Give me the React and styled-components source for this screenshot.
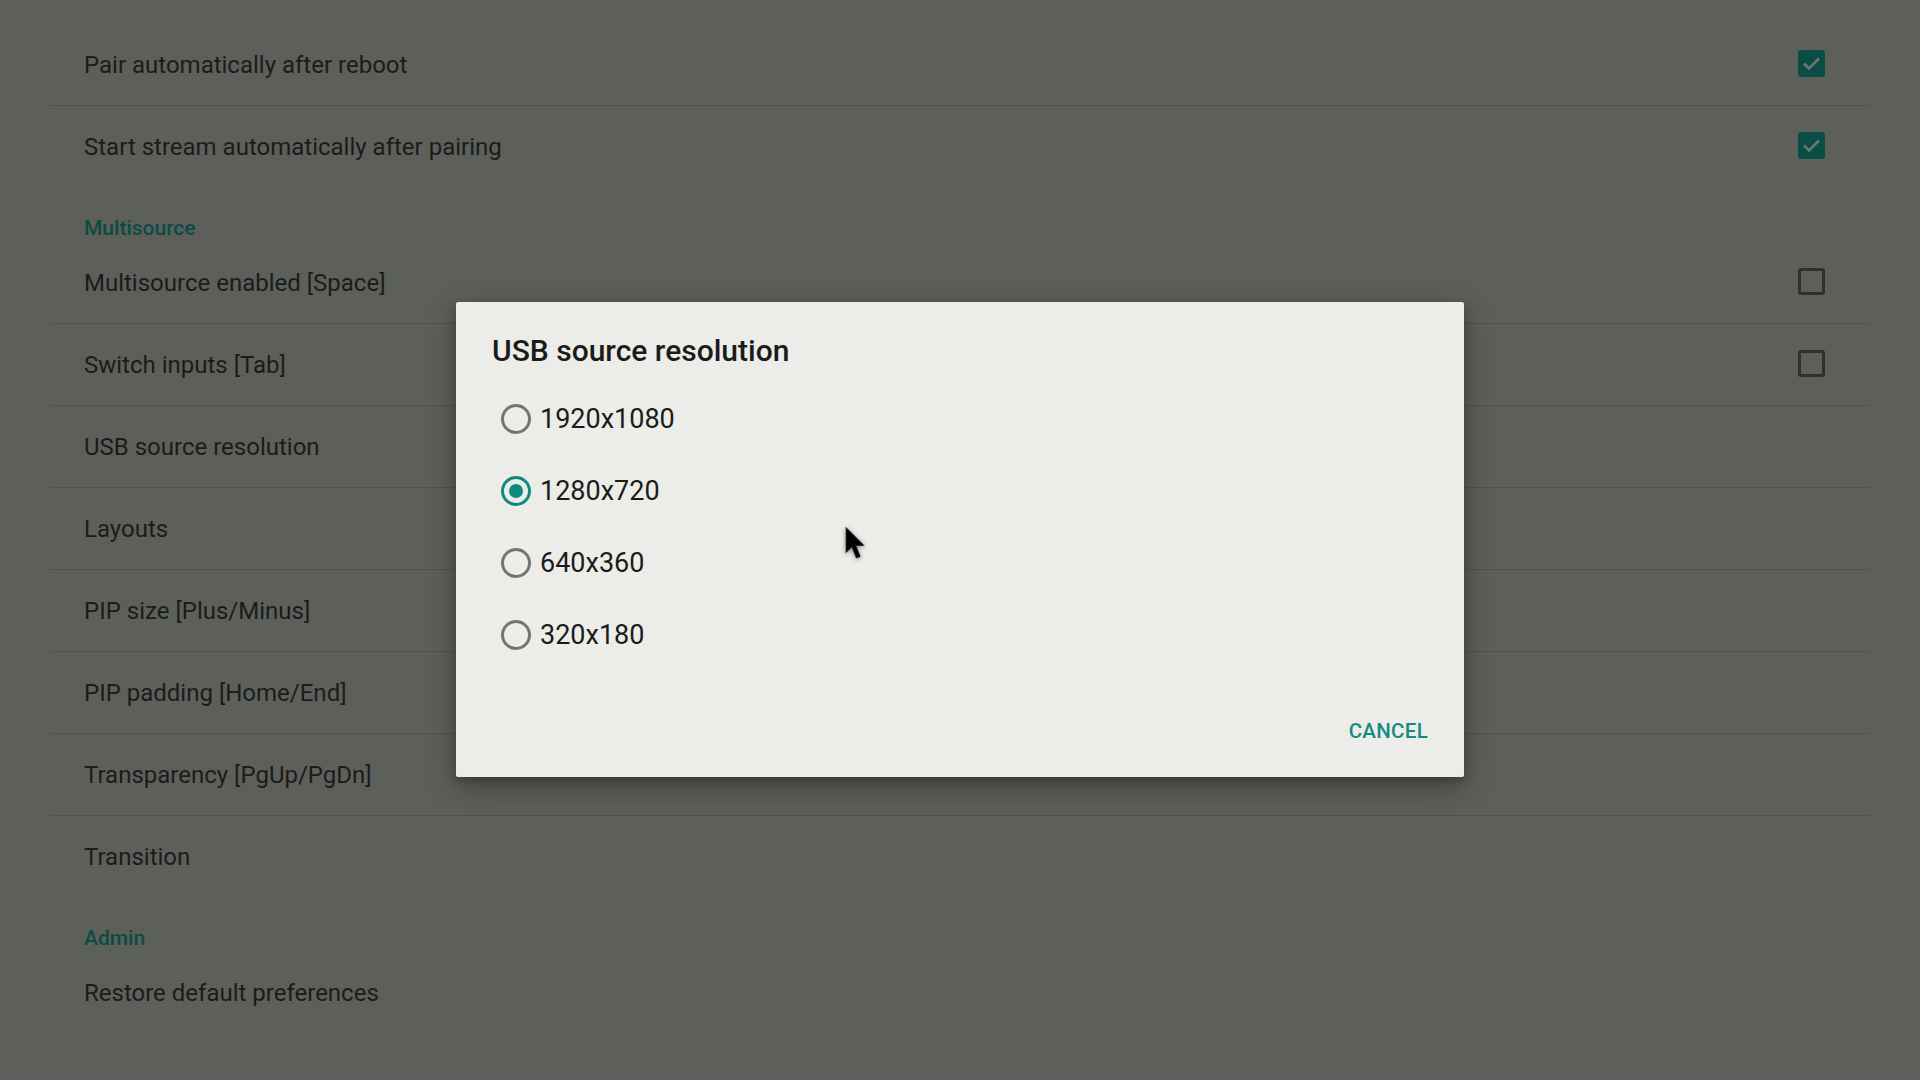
import React from 'react';
import styled, { createGlobalStyle } from 'styled-components';

const GlobalStyle = createGlobalStyle`
  html, body {
    margin: 0;
    padding: 0;
    background: #5d5f5a;
    font-family: Roboto, "Noto Sans", sans-serif;
  }
`;

const Screen = styled.div`
  position: relative;
  width: 1920px;
  height: 1080px;
  overflow: hidden;
  background: #5d5f5a;
`;

const List = styled.div`
  display: flex;
  flex-direction: column;
  margin: 0 50px 0 49px;
  padding-top: 24px;
`;

const Row = styled.div`
  box-sizing: border-box;
  height: 82px;
  display: flex;
  align-items: center;
  justify-content: space-between;
  padding: 0 45px 0 35px;
  border-bottom: 1px solid ${props => (props.divider ? '#51534e' : 'transparent')};
`;

const Label = styled.span`
  font-size: 24px;
  color: #1b1c1a;
`;

const Header = styled.div`
  box-sizing: border-box;
  height: 54px;
  padding: 28px 35px 0;
  font-size: 21px;
  font-weight: 500;
  line-height: 24px;
  color: #0b4b45;
`;

const Box = styled.div`
  box-sizing: border-box;
  width: 27px;
  height: 27px;
  margin-top: -3px;
  border-radius: 3px;
  display: flex;
  align-items: center;
  justify-content: center;
  background: ${props => (props.checked ? '#0a4c46' : 'transparent')};
  border: ${props => (props.checked ? 'none' : '3px solid #30312e')};
`;

const Scrim = styled.div`
  position: absolute;
  inset: 0;
  display: flex;
  align-items: flex-start;
  justify-content: center;
  padding-top: 302px;
`;

const Dialog = styled.div`
  box-sizing: border-box;
  width: 1008px;
  height: 475px;
  background: #ecede8;
  border-radius: 2px;
  box-shadow: 0 10px 30px rgba(0, 0, 0, 0.3), 0 4px 10px rgba(0, 0, 0, 0.2);
  padding: 30px 36px 0;
  display: flex;
  flex-direction: column;
`;

const Title = styled.div`
  font-size: 30px;
  font-weight: 500;
  line-height: 38px;
  color: #1b1b1b;
  margin-bottom: 13px;
`;

const Options = styled.div`
  display: flex;
  flex-direction: column;
`;

const Option = styled.div`
  height: 72px;
  display: flex;
  align-items: center;
  padding-left: 9px;
  gap: 9px;
`;

const Radio = styled.div`
  box-sizing: border-box;
  width: 30px;
  height: 30px;
  border-radius: 50%;
  border: 3px solid ${props => (props.checked ? '#0f8a80' : '#747573')};
  display: flex;
  align-items: center;
  justify-content: center;

  &::after {
    content: '';
    width: 14px;
    height: 14px;
    border-radius: 50%;
    background: ${props => (props.checked ? '#0f8a80' : 'transparent')};
  }
`;

const OptionText = styled.span`
  font-size: 27px;
  color: #1b1b1b;
`;

const Actions = styled.div`
  flex: 1;
  display: flex;
  align-items: center;
  justify-content: flex-end;
  padding-top: 14px;
`;

const TextButton = styled.span`
  font-size: 20.5px;
  font-weight: 500;
  color: #138a82;
  letter-spacing: 0.3px;
`;

const Cursor = styled.svg`
  position: absolute;
  left: 845px;
  top: 527px;
  filter: drop-shadow(0 1px 2px rgba(0, 0, 0, 0.5));
`;

const Check = () => (
  <svg width="19" height="15" viewBox="0 0 19 15">
    <path d="M2 7.5 L7 12.5 L17 2.5" fill="none" stroke="#6f7571" strokeWidth="2.6" />
  </svg>
);

const items = [
  { type: 'row', label: 'Pair automatically after reboot', box: true, divider: true },
  { type: 'row', label: 'Start stream automatically after pairing', box: true },
  { type: 'header', label: 'Multisource' },
  { type: 'row', label: 'Multisource enabled [Space]', box: false, divider: true },
  { type: 'row', label: 'Switch inputs [Tab]', box: false, divider: true },
  { type: 'row', label: 'USB source resolution', divider: true },
  { type: 'row', label: 'Layouts', divider: true },
  { type: 'row', label: 'PIP size [Plus/Minus]', divider: true },
  { type: 'row', label: 'PIP padding [Home/End]', divider: true },
  { type: 'row', label: 'Transparency [PgUp/PgDn]', divider: true },
  { type: 'row', label: 'Transition' },
  { type: 'header', label: 'Admin' },
  { type: 'row', label: 'Restore default preferences' },
];

const resolutions = ['1920x1080', '1280x720', '640x360', '320x180'];

const App = () => {
  return (
    <Screen>
      <GlobalStyle />
      <List>
        {items.map(item =>
          item.type === 'header' ? (
            <Header key={item.label}>{item.label}</Header>
          ) : (
            <Row key={item.label} divider={item.divider}>
              <Label>{item.label}</Label>
              {item.box !== undefined && (
                <Box checked={item.box}>{item.box && <Check />}</Box>
              )}
            </Row>
          )
        )}
      </List>
      <Scrim>
        <Dialog>
          <Title>USB source resolution</Title>
          <Options>
            {resolutions.map(r => (
              <Option key={r}>
                <Radio checked={r === '1280x720'} />
                <OptionText>{r}</OptionText>
              </Option>
            ))}
          </Options>
          <Actions>
            <TextButton>CANCEL</TextButton>
          </Actions>
        </Dialog>
      </Scrim>
      <Cursor width="23" height="34" viewBox="0 0 20 30">
        <path d="M1 1 L1 22 L6 17 L10 27 L13 26 L9 16 L16 16 Z" fill="#000" stroke="#111" strokeWidth="1" />
      </Cursor>
    </Screen>
  );
};

export default App;
